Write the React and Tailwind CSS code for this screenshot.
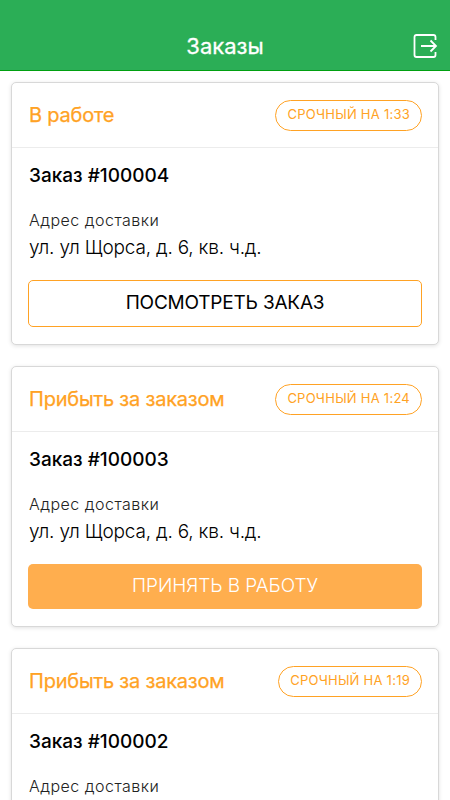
const orders = [
  { id: 100004, status: "В работе", time: "1:33", action: "ПОСМОТРЕТЬ ЗАКАЗ", outlined: true },
  { id: 100003, status: "Прибыть за заказом", time: "1:24", action: "ПРИНЯТЬ В РАБОТУ", outlined: false },
  { id: 100002, status: "Прибыть за заказом", time: "1:19", action: "ПРИНЯТЬ В РАБОТУ", outlined: false },
];

const OrderCard = ({ order }) => (
  <div className="shrink-0 rounded-[5px] border border-[#d8d8d8] bg-white shadow-[0_1px_4px_rgba(0,0,0,0.12)]">
    <div className="flex h-[65px] items-center justify-between border-b border-[#ececec] pl-[17px] pr-4">
      <span className="whitespace-nowrap text-[20px] tracking-[-0.2px] text-[#ffa224] [-webkit-text-stroke:0.25px_#ffa224]">
        {order.status}
      </span>
      <span className="flex h-[31px] items-center whitespace-nowrap rounded-full border border-[#ffa224] px-[11px] text-[13px] tracking-[0.25px] text-[#ffa224]">
        СРОЧНЫЙ НА {order.time}
      </span>
    </div>
    <div className="px-4 pt-4">
      <div className="pl-px text-[19px] font-medium leading-6 text-black">Заказ #{order.id}</div>
      <div className="mt-5 pl-px text-[16px] font-light leading-6 tracking-[0.48px] text-[#222]">Адрес доставки</div>
      <div className="mt-1 pl-px text-[19px] font-light leading-6 tracking-[-0.2px] text-black">
        ул. ул Щорса, д. 6, кв. ч.д.
      </div>
      {order.outlined ? (
        <button className="mb-[17px] mt-5 flex h-[47px] w-full items-center justify-center rounded-[5px] border border-[#ffa224] text-[19px] tracking-[-0.2px] text-black">
          {order.action}
        </button>
      ) : (
        <button className="mb-[17px] mt-5 flex h-[45px] w-full items-center justify-center rounded-[5px] bg-[#ffae4e] text-[19px] font-light tracking-[-0.05px] text-white">
          {order.action}
        </button>
      )}
    </div>
  </div>
);

export default function App() {
  return (
    <div className="flex h-[800px] w-[450px] flex-col overflow-hidden bg-white font-[Inter,sans-serif]">
      <header className="grid h-[71px] shrink-0 grid-cols-[1fr_auto_1fr] items-end border-b border-[#00a010] bg-[#2bae56] pb-[10px] text-white">
        <h1 className="col-start-2 text-[22px] leading-7 [-webkit-text-stroke:0.3px_white]">Заказы</h1>
        <button className="mb-0.5 mr-3 justify-self-end">
          <svg width="26" height="26" viewBox="0 0 26 26" fill="none" stroke="currentColor" strokeWidth="1.8">
            <path d="M23.5 8V5Q23.5 3 21.5 3H4.5Q2.5 3 2.5 5V23Q2.5 25 4.5 25H21.5Q23.5 25 23.5 23V20M9 14H24M18.5 8.5L24 14L18.5 19.5" />
          </svg>
        </button>
      </header>
      <main className="flex flex-col gap-[21px] px-[11px] pt-[11px]">
        {orders.map((order) => (
          <OrderCard key={order.id} order={order} />
        ))}
      </main>
    </div>
  );
}
